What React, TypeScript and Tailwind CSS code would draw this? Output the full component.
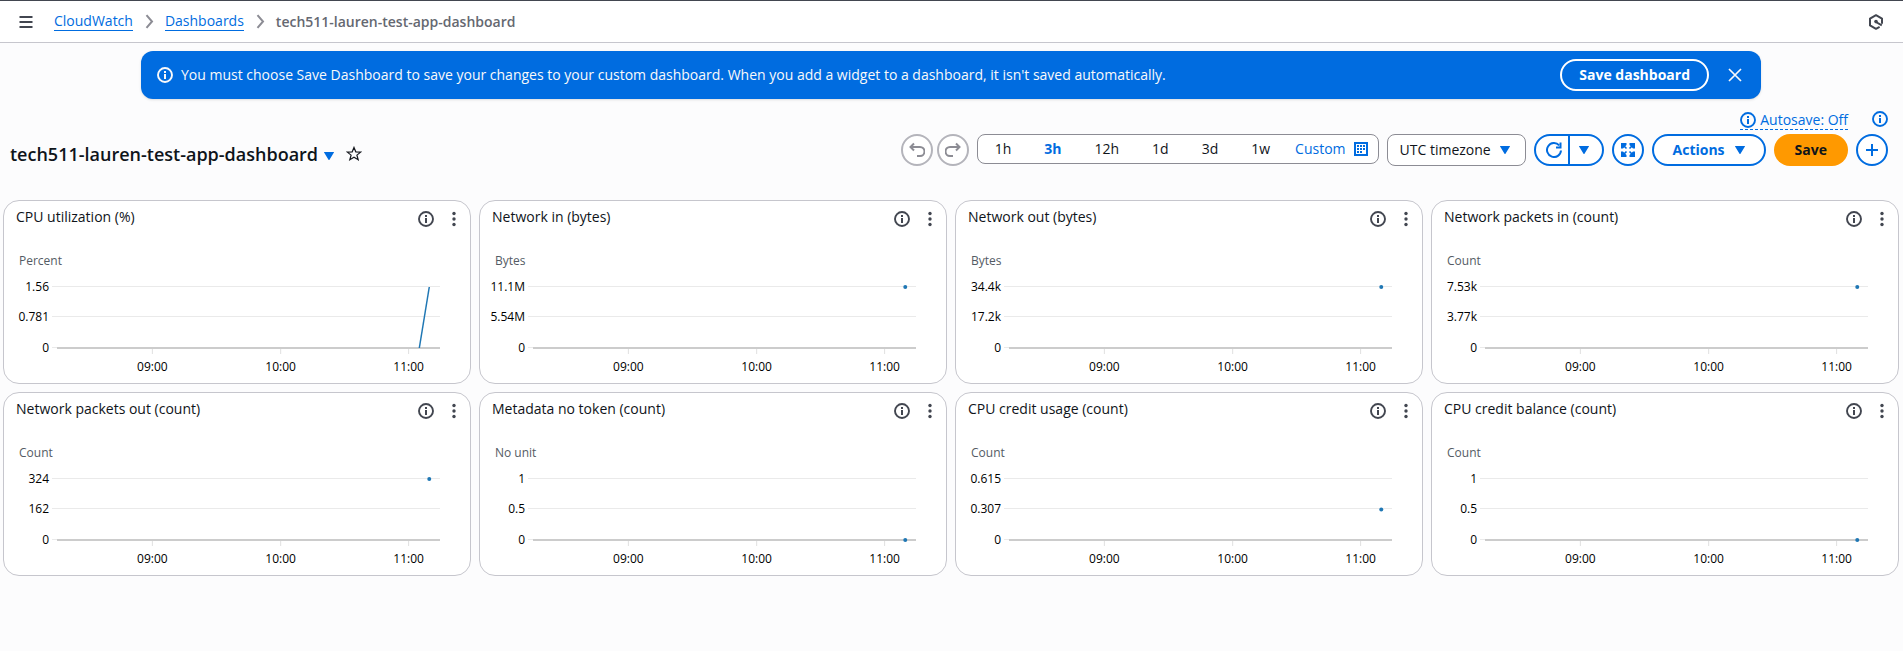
import type { ReactNode } from "react";

type IconProps = { className?: string };

function Icon({ className = "size-4", children }: { className?: string; children: ReactNode }) {
  return (
    <svg
      viewBox="0 0 16 16"
      className={`shrink-0 ${className}`}
      fill="none"
      stroke="currentColor"
      strokeWidth="2"
      aria-hidden="true"
    >
      {children}
    </svg>
  );
}

function InfoIcon({ className }: IconProps) {
  return (
    <Icon className={className}>
      <circle cx="8" cy="8" r="7" strokeWidth="1.9" />
      <path d="M8 4v2M8 7v5" />
      <path d="M7 7.5h1M7 11.5h2" strokeWidth="1" />
    </Icon>
  );
}

function Caret({ className = "h-2 w-[10px]" }: IconProps) {
  return (
    <svg viewBox="0 0 10 8" className={`shrink-0 ${className}`} fill="currentColor" aria-hidden="true">
      <path d="M0.4 0h9.2c.4 0 .5.3.3.6L5.5 7.7c-.2.3-.8.3-1 0L.1.6C-.1.3 0 0 .4 0z" />
    </svg>
  );
}

function Chevron() {
  return (
    <Icon className="size-4 text-[#8c8c94]">
      <path d="M5.5 1.2 11 7.5 5.5 13.8" />
    </Icon>
  );
}

type Widget = {
  title: string;
  unit: string;
  ticks: [string, string, string];
  points: { x: number; y: number }[];
};

const LATEST = 97.2;

const widgets: Widget[] = [
  { title: "CPU utilization (%)", unit: "Percent", ticks: ["1.56", "0.781", "0"], points: [{ x: 94.6, y: 0 }, { x: LATEST, y: 1 }] },
  { title: "Network in (bytes)", unit: "Bytes", ticks: ["11.1M", "5.54M", "0"], points: [{ x: LATEST, y: 1 }] },
  { title: "Network out (bytes)", unit: "Bytes", ticks: ["34.4k", "17.2k", "0"], points: [{ x: LATEST, y: 1 }] },
  { title: "Network packets in (count)", unit: "Count", ticks: ["7.53k", "3.77k", "0"], points: [{ x: LATEST, y: 1 }] },
  { title: "Network packets out (count)", unit: "Count", ticks: ["324", "162", "0"], points: [{ x: LATEST, y: 1 }] },
  { title: "Metadata no token (count)", unit: "No unit", ticks: ["1", "0.5", "0"], points: [{ x: LATEST, y: 0 }] },
  { title: "CPU credit usage (count)", unit: "Count", ticks: ["0.615", "0.307", "0"], points: [{ x: LATEST, y: 0.5 }] },
  { title: "CPU credit balance (count)", unit: "Count", ticks: ["1", "0.5", "0"], points: [{ x: LATEST, y: 0 }] },
];

const hours = [
  { label: "09:00", x: "24.9%" },
  { label: "10:00", x: "58.4%" },
  { label: "11:00", x: "91.8%" },
];

const PLOT_TOP = 18;
const PLOT_HEIGHT = 61;

function Chart({ unit, ticks, points }: Omit<Widget, "title">) {
  const yOf = (v: number) => PLOT_TOP + PLOT_HEIGHT * (1 - v);
  return (
    <div className="mt-[26px]">
      <div className="pl-[15px] text-xs leading-4 text-[#545b64]">{unit}</div>
      <div className="pr-[30px] pl-[53px]">
        <svg className="block h-[104px] w-full overflow-visible text-xs" role="img" aria-label={`${unit} over time`}>
          {ticks.map((t, i) => {
            const y = Math.floor(yOf(1 - i / 2));
            return (
              <g key={t}>
                <line x1="-5" x2="100%" y1={y - 0.5} y2={y - 0.5} stroke="#eaeaea" />
                <text x="-8" y={y + 4} textAnchor="end" fill="#000000">{t}</text>
              </g>
            );
          })}
          <line x1="0" x2="100%" y1={yOf(0)} y2={yOf(0)} stroke="#cccccc" strokeWidth="2" />
          {hours.map((h) => (
            <g key={h.label}>
              <line x1={h.x} x2={h.x} y1={yOf(0) + 1} y2={yOf(0) + 6} stroke="#e0e0e0" />
              <text x={h.x} y={yOf(0) + 23} textAnchor="middle" fill="#000000">{h.label}</text>
            </g>
          ))}
          {points.length > 1 ? (
            <line
              x1={`${points[0].x}%`}
              y1={yOf(points[0].y)}
              x2={`${points[1].x}%`}
              y2={yOf(points[1].y)}
              stroke="#1f77b4"
              strokeWidth="1.5"
            />
          ) : (
            <circle cx={`${points[0].x}%`} cy={yOf(points[0].y)} r="2" fill="#1f77b4" />
          )}
        </svg>
      </div>
    </div>
  );
}

function WidgetCard({ title, ...chart }: Widget) {
  return (
    <article className="rounded-2xl border border-[#c6c6cd] bg-white pb-[10px]">
      <header className="flex items-start justify-between pt-[6px] pr-3 pl-3">
        <h2 className="text-sm leading-5">{title}</h2>
        <div className="flex items-center gap-4 pt-1 text-[#424650]">
          <button type="button" aria-label={`About ${title}`}>
            <InfoIcon className="block size-4" />
          </button>
          <button type="button" aria-label={`${title} actions`}>
            <svg viewBox="0 0 8 16" className="block h-4 w-2" fill="currentColor" aria-hidden="true">
              <circle cx="4" cy="2.5" r="1.7" />
              <circle cx="4" cy="8" r="1.7" />
              <circle cx="4" cy="13.5" r="1.7" />
            </svg>
          </button>
        </div>
      </header>
      <Chart {...chart} />
    </article>
  );
}

const ranges = ["1h", "3h", "12h", "1d", "3d", "1w"];

const roundButton = "flex size-8 items-center justify-center rounded-full border-2 bg-white";

export default function App() {
  return (
    <div className="min-h-screen bg-[#fcfcfd] font-['Open_Sans','Noto_Sans',sans-serif] text-sm text-[#0f141a]">
      <header className="flex h-[43px] items-center justify-between border-t border-b border-t-[#424650] border-b-[#c6c6cd] bg-white pr-[19px] pl-[18px]">
        <div className="flex items-center gap-5">
          <button type="button" aria-label="Open navigation" className="text-[#424650]">
            <Icon className="block size-4">
              <path d="M1.5 3h13M1.5 8h13M1.5 13h13" />
            </Icon>
          </button>
          <nav aria-label="Breadcrumb">
            <ol className="flex items-center gap-2 leading-[18px]">
              <li>
                <a href="#cloudwatch" className="block border-b border-[#006ce0] text-[#006ce0]">CloudWatch</a>
              </li>
              <li aria-hidden="true"><Chevron /></li>
              <li>
                <a href="#dashboards" className="block border-b border-[#006ce0] text-[#006ce0]">Dashboards</a>
              </li>
              <li aria-hidden="true"><Chevron /></li>
              <li className="font-semibold text-[#656871]">tech511-lauren-test-app-dashboard</li>
            </ol>
          </nav>
        </div>
        <button type="button" aria-label="Amazon Q" className="text-[#424650]">
          <Icon className="block size-4">
            <path d="M14 9.8V4.6L8 1.2 2 4.6v6.8l6 3.4 3.6-2" strokeLinejoin="round" />
            <path d="M8 8l5.8 3.3" />
            <circle cx="8" cy="7.6" r="1.8" fill="currentColor" stroke="none" />
          </Icon>
        </button>
      </header>

      <div className="mr-[142px] ml-[141px] mt-2 flex h-12 items-center justify-between rounded-xl bg-[#006ce0] pr-[18px] pl-4 text-[#f9f9fa] shadow-sm">
        <div className="flex items-center gap-2">
          <InfoIcon />
          <p>
            You must choose Save Dashboard to save your changes to your custom dashboard. When you add a widget to a
            dashboard, it isn't saved automatically.
          </p>
        </div>
        <div className="flex items-center gap-[18px]">
          <button type="button" className="h-8 rounded-full border-2 border-white px-[17px] font-bold text-white">
            Save dashboard
          </button>
          <button type="button" aria-label="Dismiss">
            <Icon className="block size-4">
              <path d="M2 2l12 12M14 2L2 14" strokeWidth="1.7" />
            </Icon>
          </button>
        </div>
      </div>

      <main>
        <div className="flex items-end justify-between pt-[11px] pr-[15px] pl-[10px]">
          <div className="flex items-center">
            <h1 className="text-lg leading-6 font-semibold">tech511-lauren-test-app-dashboard</h1>
            <button type="button" aria-label="Switch dashboard" className="ml-[6px] pt-1 text-[#006ce0]">
              <Caret className="block h-2 w-[10px]" />
            </button>
            <button type="button" aria-label="Add to favorites" className="ml-3 text-[#16191f]">
              <Icon className="block size-4">
                <path
                  d="M8 1.4l1.8 4.4 4.9.3-3.8 3 1.3 4.7L8 11.2l-4.2 2.6 1.3-4.7-3.8-3 4.9-.3z"
                  strokeWidth="1.2"
                />
              </Icon>
            </button>
          </div>

          <div className="flex flex-col items-end gap-1">
            <div className="flex items-start gap-6 text-[#006ce0]">
              <button type="button" className="flex h-5 items-center gap-1 border-b border-dashed border-[#006ce0]">
                <InfoIcon />
                Autosave: Off
              </button>
              <button type="button" aria-label="About this dashboard" className="pt-[1px]">
                <InfoIcon className="block size-4" />
              </button>
            </div>

            <div className="flex items-start gap-2">
              <div className="flex gap-1 text-[#8c8c94]">
                <button type="button" aria-label="Undo" className={`${roundButton} border-[#b4b4bb]`}>
                  <Icon>
                    <path d="M5 1.5L1.5 5 5 8.5" />
                    <path d="M1.5 5H11a4 4 0 0 1 0 9H8" />
                  </Icon>
                </button>
                <button type="button" aria-label="Redo" className={`${roundButton} border-[#b4b4bb]`}>
                  <Icon>
                    <path d="M11 1.5L14.5 5 11 8.5" />
                    <path d="M14.5 5H5a4 4 0 0 0 0 9h3" />
                  </Icon>
                </button>
              </div>

              <div className="flex h-[30px] items-center gap-px rounded-lg border border-[#8c8c94] bg-white pr-[9px] pl-px">
                {ranges.map((r) => (
                  <button
                    key={r}
                    type="button"
                    aria-pressed={r === "3h"}
                    className={r === "3h" ? "px-4 font-bold text-[#006ce0]" : "px-4"}
                  >
                    {r}
                  </button>
                ))}
                <button type="button" className="ml-2 flex items-center gap-[7px] text-[#006ce0]">
                  Custom
                  <Icon>
                    <path d="M2 2h12v12H2z" />
                    <path
                      d="M4 4h2v2H4zM7 4h2v2H7zM10 4h2v2h-2zM4 7h2v2H4zM7 7h2v2H7zM10 7h2v2h-2zM4 10h2v2H4zM7 10h2v2H7z"
                      fill="currentColor"
                      stroke="none"
                    />
                  </Icon>
                </button>
              </div>

              <div className="relative">
                <select
                  aria-label="Timezone"
                  className="h-8 w-[139px] appearance-none rounded-lg border border-[#8c8c94] bg-white pl-3"
                  defaultValue="utc"
                >
                  <option value="utc">UTC timezone</option>
                  <option value="local">Local timezone</option>
                </select>
                <Caret className="pointer-events-none absolute top-3 right-4 h-2 w-[10px] text-[#006ce0]" />
              </div>

              <div className="flex h-8 rounded-full border-2 border-[#006ce0] bg-white text-[#006ce0]">
                <button type="button" aria-label="Refresh" className="flex w-8 items-center justify-center pl-1">
                  <Icon>
                    <path d="M15 8.5A7 7 0 1 1 13.2 3.3" />
                    <path d="M10 5.5H14.5V0.5" />
                  </Icon>
                </button>
                <button
                  type="button"
                  aria-label="Refresh options"
                  className="flex w-[34px] items-center justify-center border-l-2 border-[#006ce0] pr-1"
                >
                  <Caret />
                </button>
              </div>

              <button type="button" aria-label="Full screen" className={`${roundButton} border-[#006ce0] text-[#006ce0]`}>
                <Icon>
                  <path
                    d="M1 1h5.5v2L3 6.5H1zM15 1H9.5v2L13 6.5h2zM1 15h5.5v-2L3 9.5H1zM15 15H9.5v-2L13 9.5h2z"
                    fill="currentColor"
                    stroke="none"
                  />
                  <path d="M3 3l3.5 3.5M13 3L9.5 6.5M3 13l3.5-3.5M13 13L9.5 9.5" strokeWidth="1.6" />
                </Icon>
              </button>

              <button
                type="button"
                className="flex h-8 items-center gap-[10px] rounded-full border-2 border-[#006ce0] bg-white px-[19px] font-bold text-[#006ce0]"
              >
                Actions
                <Caret />
              </button>

              <button type="button" className="h-8 rounded-full bg-[#ff9900] px-[21px] font-bold text-[#0f141a]">
                Save
              </button>

              <button type="button" aria-label="Add widget" className={`${roundButton} border-[#006ce0] text-[#006ce0]`}>
                <Icon>
                  <path d="M8 2v12M2 8h12" />
                </Icon>
              </button>
            </div>
          </div>
        </div>

        <section className="mt-[34px] grid grid-cols-4 gap-2 pr-1 pl-[3px]" aria-label="Widgets">
          {widgets.map((w) => (
            <WidgetCard key={w.title} {...w} />
          ))}
        </section>
      </main>
    </div>
  );
}
